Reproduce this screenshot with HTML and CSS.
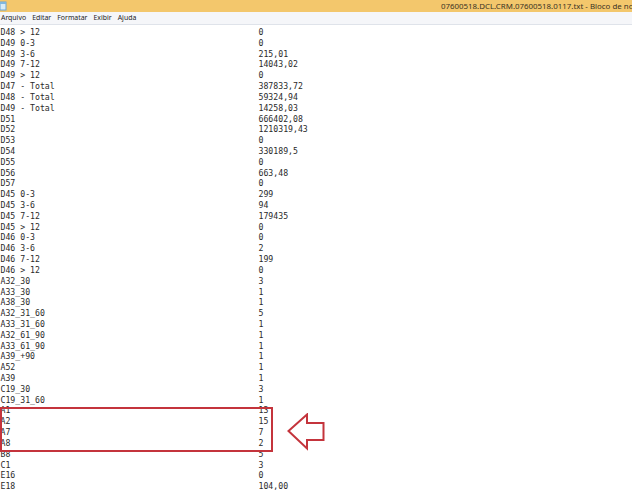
FILE: index.html
```html
<!DOCTYPE html>
<html lang="pt">
<head>
<meta charset="utf-8">
<title>Bloco de notas</title>
<link rel="stylesheet" href="styles.css">
</head>
<body>
<div class="window">
  <div class="titlebar">
    <svg class="appicon" width="7" height="10" viewBox="0 0 7 10"><rect x="0" y="1" width="6" height="8" fill="#d8ecf8" stroke="#6aa6d6" stroke-width="1"/><rect x="0" y="1" width="6" height="2" fill="#7fb7e0"/></svg>
    <span class="title">07600518.DCL.CRM.07600518.0117.txt - Bloco de notas</span>
  </div>
  <div class="menubar">
    <span class="menu">Arquivo</span>
    <span class="menu">Editar</span>
    <span class="menu">Formatar</span>
    <span class="menu">Exibir</span>
    <span class="menu">Ajuda</span>
  </div>
  <div class="content">
    <span>D48 &gt; 12</span><span>0</span>
    <span>D49 0-3</span><span>0</span>
    <span>D49 3-6</span><span>215,01</span>
    <span>D49 7-12</span><span>14043,02</span>
    <span>D49 &gt; 12</span><span>0</span>
    <span>D47 - Total</span><span>387833,72</span>
    <span>D48 - Total</span><span>59324,94</span>
    <span>D49 - Total</span><span>14258,03</span>
    <span>D51</span><span>666402,08</span>
    <span>D52</span><span>1210319,43</span>
    <span>D53</span><span>0</span>
    <span>D54</span><span>330189,5</span>
    <span>D55</span><span>0</span>
    <span>D56</span><span>663,48</span>
    <span>D57</span><span>0</span>
    <span>D45 0-3</span><span>299</span>
    <span>D45 3-6</span><span>94</span>
    <span>D45 7-12</span><span>179435</span>
    <span>D45 &gt; 12</span><span>0</span>
    <span>D46 0-3</span><span>0</span>
    <span>D46 3-6</span><span>2</span>
    <span>D46 7-12</span><span>199</span>
    <span>D46 &gt; 12</span><span>0</span>
    <span>A32_30</span><span>3</span>
    <span>A33_30</span><span>1</span>
    <span>A38_30</span><span>1</span>
    <span>A32_31_60</span><span>5</span>
    <span>A33_31_60</span><span>1</span>
    <span>A32_61_90</span><span>1</span>
    <span>A33_61_90</span><span>1</span>
    <span>A39_+90</span><span>1</span>
    <span>A52</span><span>1</span>
    <span>A39</span><span>1</span>
    <span>C19_30</span><span>3</span>
    <span>C19_31_60</span><span>1</span>
    <span>A1</span><span>13</span>
    <span>A2</span><span>15</span>
    <span>A7</span><span>7</span>
    <span>A8</span><span>2</span>
    <span>B8</span><span>5</span>
    <span>C1</span><span>3</span>
    <span>E16</span><span>0</span>
    <span>E18</span><span>104,00</span>
  </div>
  <div class="highlight"></div>
  <svg class="arrow" width="40" height="38" viewBox="0 0 40 38"><path d="M1.5 18 L20 1.5 L20 10 L36.5 10 L36.5 27 L20 27 L20 35.5 Z" fill="none" stroke="#c4343c" stroke-width="2" stroke-linejoin="miter"/></svg>
</div>
</body>
</html>
```
FILE: styles.css
```css
html, body {
  margin: 0;
  padding: 0;
  background: #ffffff;
}
.window {
  position: relative;
  width: 632px;
  height: 494px;
  overflow: hidden;
  background: #ffffff;
}
.titlebar {
  height: 12px;
  background: #f3c76c;
  display: flex;
  align-items: center;
  overflow: hidden;
  white-space: nowrap;
}
.appicon {
  flex: none;
  margin-left: 0;
}
.title {
  flex: none;
  margin-left: 434px;
  font-family: "Noto Sans", "Open Sans", sans-serif;
  font-size: 7.9px;
  line-height: 12px;
  color: #3a3325;
}
.menubar {
  height: 12px;
  background: #f5f6f9;
  border-bottom: 1px solid #dfe3ea;
  display: flex;
  align-items: center;
  padding-left: 1px;
  gap: 6.1px;
  font-family: "Noto Sans", "Open Sans", sans-serif;
  font-size: 6.9px;
  color: #1e1e1e;
}
.menu {
  line-height: 12px;
}
.content {
  display: grid;
  grid-template-columns: 258px auto;
  padding-top: 2px;
  padding-left: 0.5px;
  font-family: "DejaVu Sans Mono", "Liberation Mono", monospace;
  font-size: 8.2px;
  line-height: 10.82px;
  color: #2a2a2a;
  white-space: pre;
}
.highlight {
  position: absolute;
  left: 0;
  top: 407px;
  width: 269px;
  height: 41px;
  border: 2px solid #c4343c;
}
.arrow {
  position: absolute;
  left: 287px;
  top: 413px;
}
```
